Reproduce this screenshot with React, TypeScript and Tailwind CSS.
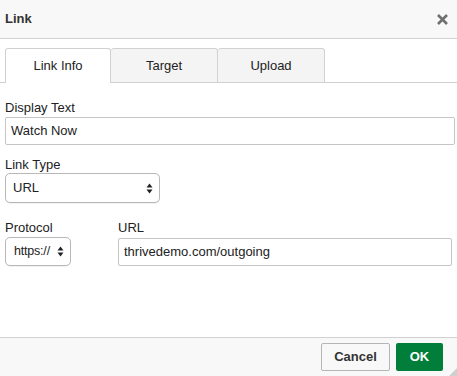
import React from "react";

const Arrows = () => (
  <svg width="7" height="11" viewBox="0 0 7 11" className="shrink-0">
    <path d="M3.5 0.5 L6.5 4.5 L0.5 4.5 Z" fill="#222" />
    <path d="M3.5 10.5 L6.5 6.5 L0.5 6.5 Z" fill="#222" />
  </svg>
);

const FakeSelect = ({ value, className }: { value: string; className: string }) => (
  <div
    className={`flex items-center justify-between rounded-[5px] border border-[#b8b8b8] bg-white pr-[6px] text-[#222] shadow-[0_1px_1px_rgba(0,0,0,0.06)] ${className}`}
  >
    <span>{value}</span>
    <Arrows />
  </div>
);

const App = () => {
  const tabs = ["Link Info", "Target", "Upload"];
  return (
    <div
      className="flex h-screen w-full flex-col bg-white text-[13px] text-[#222]"
      style={{ fontFamily: '"Liberation Sans", Arial, sans-serif' }}
    >
      {/* header */}
      <div className="flex h-[39px] shrink-0 items-center justify-between border-b border-[#d1d1d1] bg-[#f8f8f8] pl-[5px] pr-[9px]">
        <span className="font-bold text-[#333]">Link</span>
        <svg width="11" height="11" viewBox="0 0 11 11">
          <path d="M1 1 L10 10 M10 1 L1 10" stroke="#6f6f6f" strokeWidth="2.6" />
        </svg>
      </div>

      <div className="flex-1 pt-[9px]">
        {/* tabs */}
        <div className="flex border-b border-[#d1d1d1] pl-[5px]">
          {tabs.map((t, i) => (
            <div
              key={t}
              className={
                i === 0
                  ? "-mb-px flex h-[35px] w-[106px] items-center justify-center rounded-t-[3px] border border-b-0 border-[#d1d1d1] bg-white"
                  : "-mb-px flex h-[35px] w-[107px] items-center justify-center rounded-t-[3px] border border-l-0 border-[#d1d1d1] bg-[#f4f4f4]"
              }
            >
              {t}
            </div>
          ))}
        </div>

        <div className="px-[5px] pt-[17px]">
          <div className="leading-[16px]">Display Text</div>
          <div className="mt-[1px] flex h-[28px] w-[450px] items-center rounded-[2px] border border-[#c5c5c5] px-[5px]">
            Watch Now
          </div>

          <div className="mt-[12px] leading-[16px]">Link Type</div>
          <FakeSelect value="URL" className="h-[30px] w-[155px] pl-[7px]" />

          <div className="mt-[17px] flex gap-[47px]">
            <div>
              <div className="leading-[16px]">Protocol</div>
              <FakeSelect value="https://" className="mt-[1px] h-[29px] w-[66px] pl-[8px] text-[12.5px] tracking-[-0.2px]" />
            </div>
            <div className="flex-1">
              <div className="leading-[16px]">URL</div>
              <div className="mt-[2px] flex h-[28px] items-center rounded-[2px] border border-[#c5c5c5] px-[5px]">
                thrivedemo.com/outgoing
              </div>
            </div>
          </div>
        </div>
      </div>

      {/* footer */}
      <div className="relative flex h-[39px] shrink-0 items-start justify-end gap-[6px] border-t border-[#d1d1d1] bg-[#f8f8f8] pr-[14px] pt-[5px]">
        <button className="h-[28px] w-[69px] rounded-[2px] border border-[#b5b5b5] bg-[#f8f8f8] font-bold text-[#333]">
          Cancel
        </button>
        <button className="h-[28px] w-[47px] rounded-[2px] bg-[#007e3a] font-bold text-white">
          OK
        </button>
        <svg width="8" height="8" viewBox="0 0 8 8" className="absolute bottom-0 right-0">
          <path d="M8 0 L8 8 L0 8 Z" fill="#cfcfcf" />
        </svg>
      </div>
    </div>
  );
};

export default App;
